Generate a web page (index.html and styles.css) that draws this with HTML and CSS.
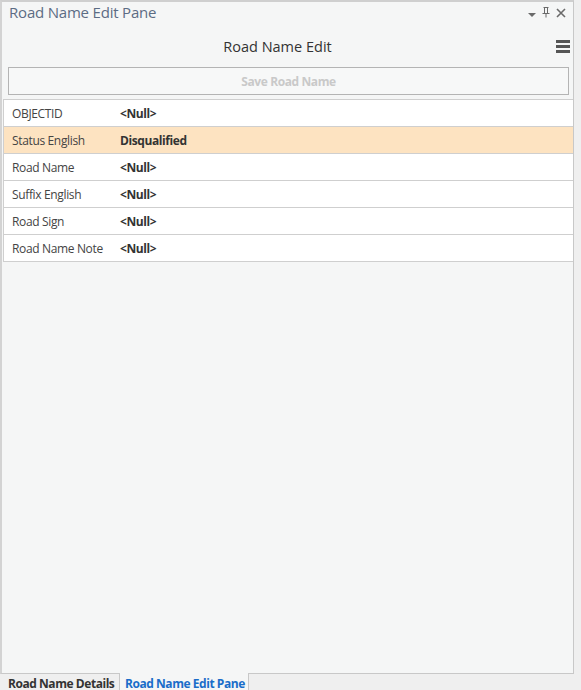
FILE: index.html
```html
<!DOCTYPE html>
<html>
<head>
<meta charset="utf-8">
<link rel="stylesheet" href="styles.css">
</head>
<body>
<div class="pane">
  <div class="titlebar">
    <span class="title">Road Name Edit Pane</span>
    <div class="win-icons">
      <svg class="ico" width="10" height="16" viewBox="0 0 10 16"><path d="M1 10h8l-4 4z" fill="#6a6a6a"/></svg>
      <svg class="ico" width="12" height="16" viewBox="0 0 12 16"><path d="M3.5 4.5h5M4.5 4.5v6M7.5 4.5v6M2.5 10.5h7M6 10.5v4" stroke="#6a6a6a" stroke-width="1" fill="none"/></svg>
      <svg class="ico" width="12" height="16" viewBox="0 0 12 16"><path d="M2 6l8 8M10 6l-8 8" stroke="#6a6a6a" stroke-width="1.6" fill="none"/></svg>
    </div>
  </div>
  <div class="header">
    <span class="header-title">Road Name Edit</span>
    <div class="menu"><span></span><span></span><span></span></div>
  </div>
  <button class="save">Save Road Name</button>
  <div class="table">
    <div class="row"><div class="label">OBJECTID</div><div class="value">&lt;Null&gt;</div></div>
    <div class="row selected"><div class="label">Status English</div><div class="value">Disqualified</div></div>
    <div class="row"><div class="label">Road Name</div><div class="value">&lt;Null&gt;</div></div>
    <div class="row"><div class="label">Suffix English</div><div class="value">&lt;Null&gt;</div></div>
    <div class="row"><div class="label">Road Sign</div><div class="value">&lt;Null&gt;</div></div>
    <div class="row"><div class="label">Road Name Note</div><div class="value">&lt;Null&gt;</div></div>
  </div>
</div>
<div class="tabs">
  <div class="tab">Road Name Details</div>
  <div class="tab active">Road Name Edit Pane</div>
</div>
</body>
</html>
```
FILE: styles.css
```css
* { box-sizing: border-box; }
html, body { margin: 0; padding: 0; }
body {
  width: 581px;
  height: 690px;
  overflow: hidden;
  background: #efefef;
  font-family: "Open Sans", "Noto Sans", sans-serif;
}
.pane {
  width: 574px;
  height: 674px;
  background: #f5f6f6;
  border-top: 2px solid #cfcfcf;
  border-left: 2px solid #d3d3d3;
  border-right: 1px solid #c8c8c8;
  border-bottom: 1px solid #c8c8c8;
  display: flex;
  flex-direction: column;
}
.titlebar {
  height: 24px;
  display: flex;
  align-items: center;
  justify-content: space-between;
  padding-left: 7px;
  padding-right: 6px;
}
.title {
  font-size: 15px;
  color: #5c6c84;
  letter-spacing: -0.2px;
  margin-top: -4px;
}
.win-icons { display: flex; align-items: center; gap: 3px; margin-top: -6px; }
.ico { display: block; }
.header {
  height: 41px;
  display: flex;
  align-items: center;
  justify-content: center;
  position: relative;
  padding-right: 20px;
}
.header-title {
  font-size: 14.5px;
  color: #333;
}
.menu {
  position: absolute;
  right: 3px;
  top: 14px;
  width: 14px;
  display: flex;
  flex-direction: column;
  gap: 2px;
}
.menu span { display: block; height: 3px; background: #555; }
.save {
  margin: 0 4px 0 6px;
  height: 28px;
  border: 1px solid #b4b4b4;
  background: #f7f8f8;
  color: #c9c9c9;
  font-family: inherit;
  font-weight: bold;
  font-size: 12px;
  letter-spacing: -0.4px;
  padding: 0;
}
.table {
  margin: 4px 0 0 1px;
  background: #fff;
  border-top: 1px solid #cfcfcf;
  border-left: 1px solid #cfcfcf;
}
.row {
  height: 27px;
  display: flex;
  align-items: center;
  border-bottom: 1px solid #cfcfcf;
  font-size: 12px;
}
.row.selected { background: #fde3c1; }
.label { width: 116px; padding-left: 8px; color: #444; letter-spacing: -0.35px; }
.value { font-weight: bold; color: #333; letter-spacing: -0.4px; }
.tabs {
  display: flex;
  height: 16px;
  margin-top: -1px;
}
.tab {
  font-size: 12px;
  font-weight: bold;
  color: #333;
  letter-spacing: -0.45px;
  padding: 0 0 0 8px;
  height: 17px;
  line-height: 22px;
  border-right: 1px solid #c8c8c8;
  width: 120px;
  white-space: nowrap;
}
.tab.active {
  background: #f5f6f6;
  color: #1a6dc9;
  width: 129px;
  padding-left: 5px;
}
```
